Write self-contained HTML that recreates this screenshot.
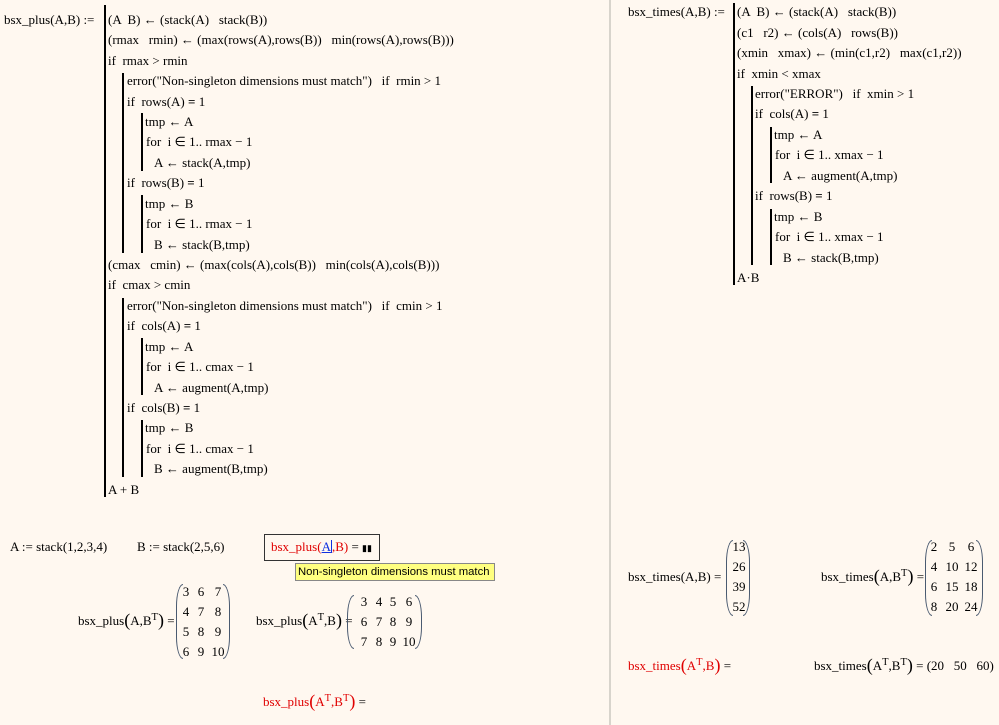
<!DOCTYPE html>
<html><head><meta charset="utf-8"><style>
html,body{margin:0;padding:0}
body{width:999px;height:725px;background:#fff8f0;position:relative;overflow:hidden;font-family:"Liberation Serif",serif;font-size:13px;color:#000}
.t{position:absolute;white-space:pre;line-height:16px;height:16px}
.b{position:absolute;width:2px;background:#000}
.r{color:#e00000}
.m{position:absolute}
.m .pl,.m .pr{position:absolute;top:0;bottom:0;width:6px;border:1.2px solid #4a5a70}
.m .pl{left:0;border-right:none;border-radius:7px 0 0 7px/22px 0 0 22px}
.m .pr{right:0;border-left:none;border-radius:0 7px 7px 0/0 22px 22px 0}
.m span{position:absolute;line-height:16px;text-align:center;width:20px}
sup{font-size:10.5px;vertical-align:5px;line-height:0}
.big{font-size:18px;line-height:0;vertical-align:-1px}
</style></head><body>
<div style="position:absolute;left:609px;top:0;width:2px;height:725px;background:#d8d4cc"></div>

<div class="t" style="left:4px;top:12px">bsx_plus(A,B) :=</div>
<div class="b" style="left:104px;top:5px;height:492px"></div>
<div class="b" style="left:122px;top:73px;height:180px"></div>
<div class="b" style="left:141px;top:113px;height:58px"></div>
<div class="b" style="left:141px;top:195px;height:58px"></div>
<div class="b" style="left:122px;top:298px;height:179px"></div>
<div class="b" style="left:141px;top:338px;height:57px"></div>
<div class="b" style="left:141px;top:420px;height:57px"></div>
<div class="t" style="left:108px;top:12px">(A  B) ← (stack(A)   stack(B))</div>
<div class="t" style="left:108px;top:32px">(rmax   rmin) ← (max(rows(A),rows(B))   min(rows(A),rows(B)))</div>
<div class="t" style="left:108px;top:53px">if  rmax &gt; rmin</div>
<div class="t" style="left:127px;top:73px">error("Non-singleton dimensions must match")   if  rmin &gt; 1</div>
<div class="t" style="left:127px;top:94px">if  rows(A) <b>=</b> 1</div>
<div class="t" style="left:145px;top:114px">tmp ← A</div>
<div class="t" style="left:146px;top:134px">for  i ∈ 1.. rmax − 1</div>
<div class="t" style="left:154px;top:155px">A ← stack(A,tmp)</div>
<div class="t" style="left:127px;top:175px">if  rows(B) <b>=</b> 1</div>
<div class="t" style="left:145px;top:196px">tmp ← B</div>
<div class="t" style="left:146px;top:216px">for  i ∈ 1.. rmax − 1</div>
<div class="t" style="left:154px;top:237px">B ← stack(B,tmp)</div>
<div class="t" style="left:108px;top:257px">(cmax   cmin) ← (max(cols(A),cols(B))   min(cols(A),cols(B)))</div>
<div class="t" style="left:108px;top:277px">if  cmax &gt; cmin</div>
<div class="t" style="left:127px;top:298px">error("Non-singleton dimensions must match")   if  cmin &gt; 1</div>
<div class="t" style="left:127px;top:318px">if  cols(A) <b>=</b> 1</div>
<div class="t" style="left:145px;top:339px">tmp ← A</div>
<div class="t" style="left:146px;top:359px">for  i ∈ 1.. cmax − 1</div>
<div class="t" style="left:154px;top:380px">A ← augment(A,tmp)</div>
<div class="t" style="left:127px;top:400px">if  cols(B) <b>=</b> 1</div>
<div class="t" style="left:145px;top:420px">tmp ← B</div>
<div class="t" style="left:146px;top:441px">for  i ∈ 1.. cmax − 1</div>
<div class="t" style="left:154px;top:461px">B ← augment(B,tmp)</div>
<div class="t" style="left:108px;top:482px">A + B</div>

<div class="t" style="left:628px;top:4px">bsx_times(A,B) :=</div>
<div class="b" style="left:733px;top:3px;height:282px"></div>
<div class="b" style="left:751px;top:86px;height:179px"></div>
<div class="b" style="left:770px;top:127px;height:56px"></div>
<div class="b" style="left:770px;top:209px;height:56px"></div>
<div class="t" style="left:737px;top:4px">(A  B) ← (stack(A)   stack(B))</div>
<div class="t" style="left:737px;top:25px">(c1   r2) ← (cols(A)   rows(B))</div>
<div class="t" style="left:737px;top:45px">(xmin   xmax) ← (min(c1,r2)   max(c1,r2))</div>
<div class="t" style="left:737px;top:66px">if  xmin &lt; xmax</div>
<div class="t" style="left:755px;top:86px">error("ERROR")   if  xmin &gt; 1</div>
<div class="t" style="left:755px;top:106px">if  cols(A) <b>=</b> 1</div>
<div class="t" style="left:774px;top:127px">tmp ← A</div>
<div class="t" style="left:775px;top:147px">for  i ∈ 1.. xmax − 1</div>
<div class="t" style="left:783px;top:168px">A ← augment(A,tmp)</div>
<div class="t" style="left:755px;top:188px">if  rows(B) <b>=</b> 1</div>
<div class="t" style="left:774px;top:209px">tmp ← B</div>
<div class="t" style="left:775px;top:229px">for  i ∈ 1.. xmax − 1</div>
<div class="t" style="left:783px;top:250px">B ← stack(B,tmp)</div>
<div class="t" style="left:737px;top:270px">A·B</div>

<div class="t" style="left:10px;top:539px">A := stack(1,2,3,4)</div>
<div class="t" style="left:137px;top:539px">B := stack(2,5,6)</div>
<div style="position:absolute;left:264px;top:534px;width:114px;height:25px;border:1px solid #333;background:#fff8f0"></div>
<div class="t r" style="left:271px;top:539px">bsx_plus(<span style="color:#1030e0;text-decoration:underline">A</span><span style="display:inline-block;width:1px;height:13px;background:#1030e0;vertical-align:-2px"></span>,B) <span style="color:#000">=</span> <span style="color:#000;font-size:9px">▮▮</span></div>
<div style="position:absolute;left:295px;top:563px;width:196px;height:16px;background:#ffff80;border:1px solid #888;font-family:'Liberation Sans',sans-serif;font-size:11.3px;line-height:16px;padding-left:2px;white-space:nowrap;overflow:hidden">Non-singleton dimensions must match</div>

<div class="t" style="left:78px;top:613px">bsx_plus<span class="big">(</span>A,B<sup>T</sup><span class="big">)</span> =</div>
<div class="m" style="left:176px;top:584px;width:54px;height:75px"><div class="pl"></div><div class="pr"></div>
<span style="left:0px;top:0">3</span><span style="left:15px;top:0">6</span><span style="left:32px;top:0">7</span>
<span style="left:0px;top:20px">4</span><span style="left:15px;top:20px">7</span><span style="left:32px;top:20px">8</span>
<span style="left:0px;top:40px">5</span><span style="left:15px;top:40px">8</span><span style="left:32px;top:40px">9</span>
<span style="left:0px;top:60px">6</span><span style="left:15px;top:60px">9</span><span style="left:32px;top:60px">10</span></div>

<div class="t" style="left:256px;top:613px">bsx_plus<span class="big">(</span>A<sup>T</sup>,B<span class="big">)</span> =</div>
<div class="m" style="left:347px;top:595px;width:75px;height:54px"><div class="pl"></div><div class="pr"></div>
<span style="left:7px;top:-1px">3</span><span style="left:22px;top:-1px">4</span><span style="left:36px;top:-1px">5</span><span style="left:52px;top:-1px">6</span>
<span style="left:7px;top:19px">6</span><span style="left:22px;top:19px">7</span><span style="left:36px;top:19px">8</span><span style="left:52px;top:19px">9</span>
<span style="left:7px;top:39px">7</span><span style="left:22px;top:39px">8</span><span style="left:36px;top:39px">9</span><span style="left:52px;top:39px">10</span></div>

<div class="t r" style="left:263px;top:694px">bsx_plus<span class="big">(</span>A<sup>T</sup>,B<sup>T</sup><span class="big">)</span> <span style="color:#000">=</span></div>

<div class="t" style="left:628px;top:569px">bsx_times(A,B) =</div>
<div class="m" style="left:726px;top:540px;width:24px;height:76px"><div class="pl"></div><div class="pr"></div>
<span style="left:3px;top:-1px">13</span><span style="left:3px;top:19px">26</span><span style="left:3px;top:39px">39</span><span style="left:3px;top:59px">52</span></div>

<div class="t" style="left:821px;top:569px">bsx_times<span class="big">(</span>A,B<sup>T</sup><span class="big">)</span> =</div>
<div class="m" style="left:925px;top:540px;width:58px;height:76px"><div class="pl"></div><div class="pr"></div>
<span style="left:-1px;top:-1px">2</span><span style="left:17px;top:-1px">5</span><span style="left:36px;top:-1px">6</span>
<span style="left:-1px;top:19px">4</span><span style="left:17px;top:19px">10</span><span style="left:36px;top:19px">12</span>
<span style="left:-1px;top:39px">6</span><span style="left:17px;top:39px">15</span><span style="left:36px;top:39px">18</span>
<span style="left:-1px;top:59px">8</span><span style="left:17px;top:59px">20</span><span style="left:36px;top:59px">24</span></div>

<div class="t r" style="left:628px;top:658px">bsx_times<span class="big">(</span>A<sup>T</sup>,B<span class="big">)</span> <span style="color:#000">=</span></div>
<div class="t" style="left:814px;top:658px">bsx_times<span class="big">(</span>A<sup>T</sup>,B<sup>T</sup><span class="big">)</span> = (20   50   60)</div>
</body></html>
